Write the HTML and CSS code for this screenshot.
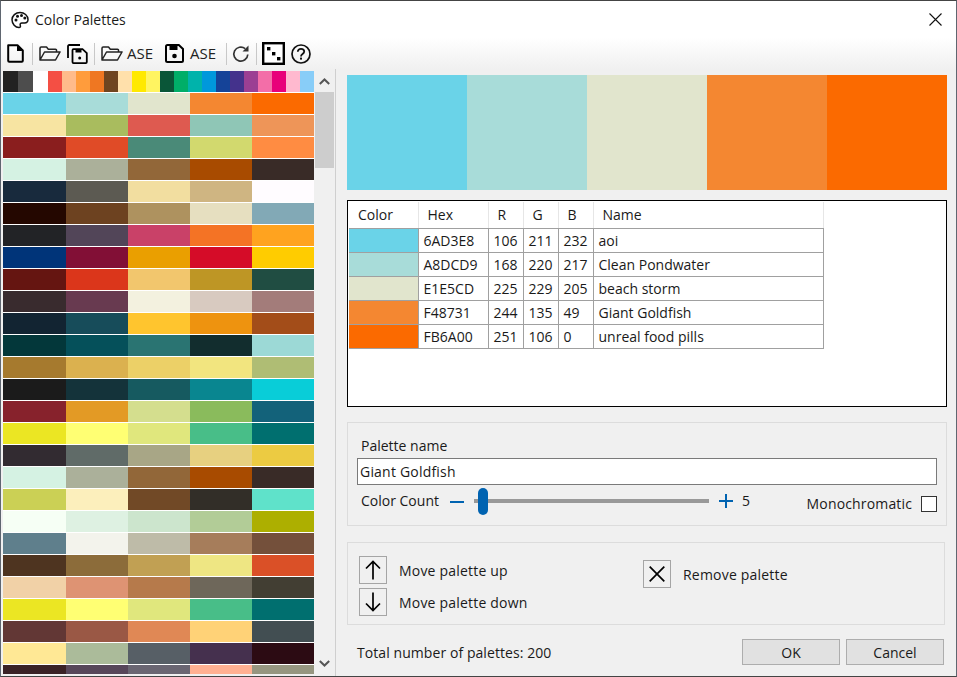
FILE: index.html
```html
<!DOCTYPE html>
<html lang="en">
<head>
<meta charset="utf-8">
<title>Color Palettes</title>
<link rel="stylesheet" href="styles.css">
</head>
<body>
<div class="window">
  <header class="titlebar">
    <svg class="app-icon" width="18" height="18" viewBox="0 0 18 18"><path d="M9 1.500C4.600 1.500 1 4.800 1 8.800c0 4 3.400 7.700 6.900 7.700 1.500 0 1.800-1 1.400-2.100-.5-1.300.2-2.400 1.600-2.400h2.600c2.200 0 3.500-1.500 3.500-3.400C16.900 4.600 13.400 1.500 9 1.500z" fill="none" stroke="#111" stroke-width="1.500"/><circle cx="5" cy="9" r="1.500" fill="#111"/><circle cx="6.500" cy="5.300" r="1.500" fill="#111"/><circle cx="10.500" cy="4.500" r="1.500" fill="#111"/><circle cx="13.800" cy="7" r="1.500" fill="#111"/></svg>
    <span class="title">Color Palettes</span>
    <svg class="close" width="13" height="13" viewBox="0 0 13 13"><path d="M.5.5l12 12M12.500.5l-12 12" stroke="#111" stroke-width="1.100"/></svg>
  </header>

  <nav class="toolbar">
    <svg class="ic ic-new" width="17" height="19" viewBox="0 0 17 19"><path d="M1.200 1.200h9.300l5.300 5.300v10.200a1 1 0 0 1-1 1H2.200a1 1 0 0 1-1-1z" fill="none" stroke="#000" stroke-width="2" stroke-linejoin="round"/><path d="M10 1.500v5.500h5.500" fill="#000"/></svg>
    <i class="sep sep-1"></i>
    <svg class="ic ic-open" width="22" height="15" viewBox="0 0 22 15"><path d="M1 14V2.200A1.200 1.200 0 0 1 2.200 1h5.300l1.800 2.200h7.200a1 1 0 0 1 1 1V6M1 14h15.500L21 6H5.500L1 14z" fill="none" stroke="#222" stroke-width="1.500" stroke-linejoin="round"/></svg>
    <svg class="ic ic-copy" width="21" height="20" viewBox="0 0 21 20"><path d="M1 14V2.200A1.200 1.200 0 0 1 2.200 1H13" fill="none" stroke="#000" stroke-width="1.800"/><path d="M5.500 6.200a1 1 0 0 1 1-1h9l4.300 4v8.900a1 1 0 0 1-1 1H6.500a1 1 0 0 1-1-1z" fill="none" stroke="#000" stroke-width="1.800"/><path d="M8.500 5.500h6v3h-6z" fill="#000"/><circle cx="12.700" cy="14" r="1.500" fill="#000"/></svg>
    <i class="sep sep-2"></i>
    <svg class="ic ic-open2" width="22" height="15" viewBox="0 0 22 15"><path d="M1 14V2.200A1.200 1.200 0 0 1 2.200 1h5.300l1.800 2.200h7.200a1 1 0 0 1 1 1V6M1 14h15.500L21 6H5.500L1 14z" fill="none" stroke="#222" stroke-width="1.500" stroke-linejoin="round"/></svg>
    <span class="ase ase-1">ASE</span>
    <svg class="ic ic-save" width="19" height="19" viewBox="0 0 19 19"><path d="M1 2.500A1.500 1.500 0 0 1 2.500 1h11.300L18 5v11.500a1.500 1.500 0 0 1-1.500 1.500h-14A1.500 1.500 0 0 1 1 16.500z" fill="none" stroke="#000" stroke-width="2"/><path d="M4.500 2h8v4h-8z" fill="#000"/><circle cx="9.500" cy="12" r="2.300" fill="#000"/></svg>
    <span class="ase ase-2">ASE</span>
    <i class="sep sep-3"></i>
    <svg class="ic ic-refresh" width="18" height="18" viewBox="0 0 18 18"><path d="M15.800 9.500A7 7 0 1 1 13.200 3.600" fill="none" stroke="#333" stroke-width="1.700"/><path d="M16.500 .5v6h-6z" fill="#333"/></svg>
    <i class="sep sep-4"></i>
    <svg class="ic ic-dice" width="23" height="23" viewBox="0 0 23 23"><rect x="1.200" y="1.200" width="20.600" height="20.600" fill="#fff" stroke="#000" stroke-width="2.400"/><rect x="5" y="5" width="3.400" height="3.400"/><rect x="10" y="10" width="3.400" height="3.400"/><rect x="15" y="15" width="3.400" height="3.400"/></svg>
    <svg class="ic ic-help" width="20" height="20" viewBox="0 0 20 20"><circle cx="10" cy="10" r="9" fill="none" stroke="#111" stroke-width="1.700"/><path d="M6.800 7.800C6.800 5.900 8.200 4.800 10 4.800s3.200 1.100 3.200 2.700c0 2.600-3.200 2.400-3.200 4.900" fill="none" stroke="#111" stroke-width="1.800"/><rect x="9" y="13.600" width="2" height="2" fill="#111"/></svg>
  </nav>

  <main class="main">
    <section class="list">
      <div class="palettes">
        <div class="strip">
          <b style="background:#222222"></b><b style="background:#4d4d4d"></b><b style="background:#ffffff"></b><b style="background:#f44f44"></b><b style="background:#ffbb8b"></b><b style="background:#ff9c3c"></b><b style="background:#ef7722"></b><b style="background:#6f4520"></b><b style="background:#ffe0ab"></b><b style="background:#ffe900"></b><b style="background:#fff461"></b><b style="background:#0a5638"></b><b style="background:#00ae68"></b><b style="background:#00b3ab"></b><b style="background:#0098dc"></b><b style="background:#154398"></b><b style="background:#44328c"></b><b style="background:#9c3f93"></b><b style="background:#f36ea8"></b><b style="background:#e8007a"></b><b style="background:#ffb9cf"></b><b style="background:#88cdf8"></b>
        </div>
        <div class="row"><b style="background:#6ad3e8"></b><b style="background:#a8dcd9"></b><b style="background:#e1e5cd"></b><b style="background:#f48731"></b><b style="background:#fb6a00"></b></div>
        <div class="row"><b style="background:#f7e4a2"></b><b style="background:#a9bc5e"></b><b style="background:#de5a50"></b><b style="background:#8fc6b6"></b><b style="background:#ee9558"></b></div>
        <div class="row"><b style="background:#8a1e1e"></b><b style="background:#e04b27"></b><b style="background:#4a8a78"></b><b style="background:#d2d96e"></b><b style="background:#ff8c42"></b></div>
        <div class="row"><b style="background:#d5f2e3"></b><b style="background:#abb09a"></b><b style="background:#926739"></b><b style="background:#a84b00"></b><b style="background:#392b27"></b></div>
        <div class="row"><b style="background:#182a3d"></b><b style="background:#5c5a52"></b><b style="background:#f2dea0"></b><b style="background:#cfb582"></b><b style="background:#fffcff"></b></div>
        <div class="row"><b style="background:#240700"></b><b style="background:#6d4220"></b><b style="background:#ae925f"></b><b style="background:#e6dfc0"></b><b style="background:#82a9b6"></b></div>
        <div class="row"><b style="background:#222326"></b><b style="background:#524558"></b><b style="background:#c94168"></b><b style="background:#f47325"></b><b style="background:#ffa31f"></b></div>
        <div class="row"><b style="background:#003479"></b><b style="background:#820f36"></b><b style="background:#ea9f00"></b><b style="background:#d50c28"></b><b style="background:#ffcc00"></b></div>
        <div class="row"><b style="background:#651511"></b><b style="background:#db361b"></b><b style="background:#f2c66d"></b><b style="background:#be9625"></b><b style="background:#204d42"></b></div>
        <div class="row"><b style="background:#392b2e"></b><b style="background:#683a50"></b><b style="background:#f3f1df"></b><b style="background:#d8cac0"></b><b style="background:#a37c7a"></b></div>
        <div class="row"><b style="background:#122432"></b><b style="background:#174c5a"></b><b style="background:#ffc52e"></b><b style="background:#ee930f"></b><b style="background:#a34d19"></b></div>
        <div class="row"><b style="background:#03373a"></b><b style="background:#05505a"></b><b style="background:#2a7472"></b><b style="background:#122d2e"></b><b style="background:#9cd9d6"></b></div>
        <div class="row"><b style="background:#a67a2e"></b><b style="background:#dbb14f"></b><b style="background:#ecd067"></b><b style="background:#f2e57f"></b><b style="background:#afbd74"></b></div>
        <div class="row"><b style="background:#1b1b1b"></b><b style="background:#14333a"></b><b style="background:#165a60"></b><b style="background:#098690"></b><b style="background:#09cdd8"></b></div>
        <div class="row"><b style="background:#87222c"></b><b style="background:#e39a25"></b><b style="background:#d4de8e"></b><b style="background:#8abb5c"></b><b style="background:#13627a"></b></div>
        <div class="row"><b style="background:#ebe623"></b><b style="background:#ffff73"></b><b style="background:#e0e77d"></b><b style="background:#48be88"></b><b style="background:#006f6f"></b></div>
        <div class="row"><b style="background:#322b31"></b><b style="background:#606b68"></b><b style="background:#a8a686"></b><b style="background:#e7d080"></b><b style="background:#eccb42"></b></div>
        <div class="row"><b style="background:#d5f2e3"></b><b style="background:#abb09a"></b><b style="background:#926739"></b><b style="background:#a84b00"></b><b style="background:#392b27"></b></div>
        <div class="row"><b style="background:#cbd055"></b><b style="background:#fcefbc"></b><b style="background:#714926"></b><b style="background:#322e28"></b><b style="background:#5fe2ca"></b></div>
        <div class="row"><b style="background:#f6fff5"></b><b style="background:#def1e2"></b><b style="background:#cce5cd"></b><b style="background:#b2cc97"></b><b style="background:#adaf00"></b></div>
        <div class="row"><b style="background:#5f7f8c"></b><b style="background:#f3f3ec"></b><b style="background:#bebba8"></b><b style="background:#a67d5b"></b><b style="background:#74503b"></b></div>
        <div class="row"><b style="background:#4e3420"></b><b style="background:#8c6c3a"></b><b style="background:#c1a053"></b><b style="background:#eee683"></b><b style="background:#da5027"></b></div>
        <div class="row"><b style="background:#f1d1a7"></b><b style="background:#de9373"></b><b style="background:#b67a4b"></b><b style="background:#6e675a"></b><b style="background:#423e33"></b></div>
        <div class="row"><b style="background:#ebe623"></b><b style="background:#ffff73"></b><b style="background:#e0e77d"></b><b style="background:#48be88"></b><b style="background:#006f6f"></b></div>
        <div class="row"><b style="background:#623735"></b><b style="background:#9a5845"></b><b style="background:#e08855"></b><b style="background:#ffd277"></b><b style="background:#424e52"></b></div>
        <div class="row"><b style="background:#ffe895"></b><b style="background:#abbb9a"></b><b style="background:#575f66"></b><b style="background:#45304e"></b><b style="background:#2c0b13"></b></div>
        <div class="row"><b style="background:#3a2226"></b><b style="background:#57475a"></b><b style="background:#6a6672"></b><b style="background:#ffb092"></b><b style="background:#969680"></b></div>
      </div>
      <div class="scrollbar">
        <div class="sb-btn"><svg width="11" height="7" viewBox="0 0 11 7"><path d="M.8 6L5.500 1.500 10.200 6" fill="none" stroke="#555" stroke-width="2"/></svg></div>
        <div class="sb-thumb"></div>
        <div class="sb-track"></div>
        <div class="sb-btn sb-down"><svg width="11" height="7" viewBox="0 0 11 7"><path d="M.8 1L5.500 5.500 10.200 1" fill="none" stroke="#555" stroke-width="2"/></svg></div>
      </div>
    </section>

    <section class="detail">
      <div class="preview">
        <b style="background:#6ad3e8"></b><b style="background:#a8dcd9"></b><b style="background:#e1e5cd"></b><b style="background:#f48731"></b><b style="background:#fb6a00"></b>
      </div>

      <div class="table-box">
        <table class="colors">
          <thead>
            <tr><th class="c-color">Color</th><th class="c-hex">Hex</th><th class="c-num">R</th><th class="c-num">G</th><th class="c-num">B</th><th class="c-name">Name</th></tr>
          </thead>
          <tbody>
            <tr><td style="background:#6ad3e8"></td><td>6AD3E8</td><td>106</td><td>211</td><td>232</td><td>aoi</td></tr>
            <tr><td style="background:#a8dcd9"></td><td>A8DCD9</td><td>168</td><td>220</td><td>217</td><td>Clean Pondwater</td></tr>
            <tr><td style="background:#e1e5cd"></td><td>E1E5CD</td><td>225</td><td>229</td><td>205</td><td>beach storm</td></tr>
            <tr><td style="background:#f48731"></td><td>F48731</td><td>244</td><td>135</td><td>49</td><td>Giant Goldfish</td></tr>
            <tr><td style="background:#fb6a00"></td><td>FB6A00</td><td>251</td><td>106</td><td>0</td><td>unreal food pills</td></tr>
          </tbody>
        </table>
      </div>

      <div class="group name-group">
        <div class="name-label">Palette name</div>
        <div class="name-input">Giant Goldfish</div>
        <div class="count-row">
          <span class="count-label">Color Count</span>
          <i class="minus"></i>
          <div class="slider"><i class="thumb"></i></div>
          <i class="plus"></i>
          <span class="count-val">5</span>
          <span class="mono">Monochromatic</span>
          <i class="checkbox"></i>
        </div>
      </div>

      <div class="group move-group">
        <div class="move-col">
          <div class="move-row">
            <div class="sq"><svg width="16" height="20" viewBox="0 0 16 20"><path d="M8 19.500V1.500M1 8.500l7-7 7 7" fill="none" stroke="#000" stroke-width="1.700"/></svg></div>
            <span>Move palette up</span>
          </div>
          <div class="move-row">
            <div class="sq"><svg width="16" height="20" viewBox="0 0 16 20"><path d="M8 .5v18M1 11.500l7 7 7-7" fill="none" stroke="#000" stroke-width="1.700"/></svg></div>
            <span>Move palette down</span>
          </div>
        </div>
        <div class="remove">
          <div class="sq"><svg width="16" height="16" viewBox="0 0 16 16"><path d="M.7.7l14.600 14.600M15.300.7L.7 15.300" fill="none" stroke="#000" stroke-width="1.700"/></svg></div>
          <span>Remove palette</span>
        </div>
      </div>

      <footer class="footer">
        <span class="total">Total number of palettes: 200</span>
        <button class="btn">OK</button>
        <button class="btn">Cancel</button>
      </footer>
    </section>
  </main>
</div>
</body>
</html>
```

FILE: styles.css
```css
* { box-sizing: border-box; }
html, body { margin: 0; padding: 0; }
body {
  width: 957px;
  height: 677px;
  overflow: hidden;
  font-family: "Open Sans", "Noto Sans", sans-serif;
  font-size: 14px;
  color: #1a1a1a;
}
.window {
  width: 957px;
  height: 677px;
  display: flex;
  flex-direction: column;
  background: #f0f0f0;
  border: 1px solid #5f6670;
  border-top-color: #444;
  border-bottom-color: #444;
}
.titlebar {
  height: 37px;
  flex: none;
  background: #fff;
  display: flex;
  align-items: center;
  padding: 0 14px 0 10px;
}
.app-icon { margin-right: 6px; }
.title { flex: 1; }
.toolbar {
  height: 31px;
  flex: none;
  display: flex;
  align-items: center;
  background: linear-gradient(#fff, #f0f0f0);
  padding-left: 6px;
}
.ic { flex: none; display: block; }
.sep { flex: none; width: 1px; height: 22px; background: #c8c8c8; }
.sep-1 { margin: 0 6px 0 8px; }
.ic-copy { margin-left: 6px; }
.sep-2 { margin: 0 6px 0 6px; }
.ase { font-size: 15px; width: 27px; color: #222; margin-bottom: 2px; }
.ase-1 { margin-left: 4px; margin-right: 11px; }
.ase-2 { margin-left: 6px; }
.sep-3 { margin: 0 5px 0 9px; }
.sep-4 { margin: 0 5px 0 6px; }
.ic-help { margin-left: 6px; }

.main { flex: 1; display: flex; min-height: 0; }
.list {
  flex: none;
  width: 335px;
  display: flex;
  padding: 2px 0 2px 2px;
  border-right: 1px solid #cfcfcf;
  height: 607px;
}
.palettes {
  flex: none;
  width: 311px;
  display: flex;
  flex-direction: column;
  gap: 1px;
  overflow: hidden;
  background: #fff;
  height: 603px;
}
.palettes b { display: block; }
.strip {
  flex: none;
  height: 21px;
  display: grid;
  grid-template-columns: 15px 15px 15px repeat(19, 14px);
}
.row {
  flex: none;
  height: 21px;
  display: grid;
  grid-template-columns: 63px repeat(4, 62px);
}
.scrollbar {
  flex: none;
  width: 19px;
  margin-left: 1px;
  display: flex;
  flex-direction: column;
  height: 603px;
}
.sb-btn {
  height: 21px;
  flex: none;
  display: flex;
  align-items: center;
  justify-content: center;
}
.sb-thumb { height: 76px; flex: none; background: #cdcdcd; }
.sb-track { flex: 1; }

.detail { flex: 1; padding: 6px 9px 0 11px; display: flex; flex-direction: column; min-width: 0; }
.preview {
  height: 115px;
  flex: none;
  display: grid;
  grid-template-columns: repeat(5, 120px);
}
.table-box {
  height: 207px;
  flex: none;
  margin-top: 10px;
  background: #fff;
  border: 1px solid #000;
  padding: 1px;
}
.colors {
  border-collapse: collapse;
  table-layout: fixed;
  width: 474px;
  font-size: 14px;
}
.colors th {
  height: 26px;
  font-weight: 400;
  text-align: left;
  padding: 0 0 0 9px;
  border-right: 1px solid #e6e6e6;
  border-bottom: 1px solid #a0a0a0;
}
.colors td {
  height: 24px;
  padding: 0 0 0 5px;
  border: 1px solid #a0a0a0;
  border-top: 0;
  white-space: nowrap;
}
.colors td:first-child { border-left: 0; }
.c-color { width: 69px; }
.c-hex { width: 70px; }
.c-num { width: 35px; }
.c-name { width: 230px; }

.group { flex: none; background: #f0f0f0; border: 1px solid #dcdcdc; }
.name-group {
  margin-top: 15px;
  height: 104px;
  padding: 14px 9px 0;
}
.name-label { height: 21px; line-height: 17px; padding-left: 4px; }
.name-input {
  height: 27px;
  background: #fff;
  border: 1px solid #7a7a7a;
  line-height: 25px;
  padding-left: 2px;
  letter-spacing: .2px;
}
.count-row { display: flex; align-items: center; height: 32px; padding-left: 4px; }
.count-label { width: 89px; flex: none; margin-bottom: 2px; }
.minus { flex: none; width: 14px; height: 2px; background: #0063b1; margin-top: 1px; }
.slider {
  flex: none;
  position: relative;
  width: 235px;
  height: 4px;
  margin-left: 10px;
  background: #999;
}
.thumb {
  position: absolute;
  left: 4px;
  top: -11px;
  width: 10px;
  height: 27px;
  border-radius: 5px;
  background: #0063b1;
}
.plus {
  flex: none;
  width: 14px;
  height: 14px;
  margin-left: 10px;
  background: linear-gradient(#0063b1, #0063b1) center / 14px 2px no-repeat,
              linear-gradient(#0063b1, #0063b1) center / 2px 14px no-repeat;
}
.count-val { width: 60px; flex: none; margin-left: 9px; margin-bottom: 2px; }
.mono { margin-left: auto; margin-top: 5px; letter-spacing: .15px; }
.checkbox {
  flex: none;
  width: 16px;
  height: 16px;
  margin-left: 9px;
  margin-top: 5px;
  background: #fff;
  border: 1px solid #333;
}
.move-group {
  margin-top: 16px;
  height: 83px;
  width: 598px;
  display: flex;
  padding: 13px 0 0 11px;
  letter-spacing: .2px;
}
.move-col { width: 284px; flex: none; display: flex; flex-direction: column; gap: 4px; }
.move-row, .remove { display: flex; align-items: center; gap: 12px; }
.remove { height: 28px; margin-top: 4px; }
.sq {
  flex: none;
  width: 28px;
  height: 28px;
  border: 1px solid #a5a5a5;
  background: #f0f0f0;
  display: flex;
  align-items: center;
  justify-content: center;
}
.footer {
  flex: none;
  display: flex;
  align-items: center;
  gap: 6px;
  margin-top: 14px;
  height: 26px;
  padding-left: 10px;
  width: 597px;
}
.total { margin-right: auto; letter-spacing: .07px; }
.btn {
  width: 98px;
  height: 26px;
  font: inherit;
  color: inherit;
  background: #e1e1e1;
  border: 1px solid #adadad;
  padding: 0;
}
```
